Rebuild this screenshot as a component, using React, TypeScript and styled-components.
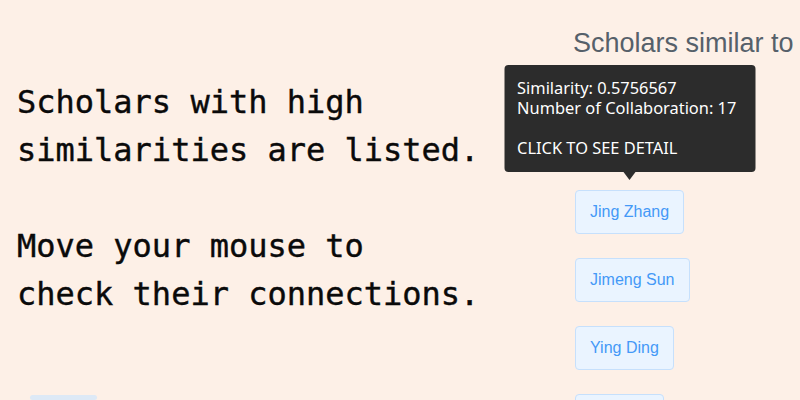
import React from "react"
import styled, { createGlobalStyle } from "styled-components"

const GlobalStyle = createGlobalStyle`
  html, body {
    margin: 0;
    padding: 0;
    background: #fdf0e7;
    overflow: hidden;
  }
`

const Page = styled.div`
  display: flex;
  width: 800px;
  height: 400px;
  overflow: hidden;
  background: #fdf0e7;
`

const Intro = styled.div`
  width: 556px;
  flex-shrink: 0;
  padding: 78px 0 0 17px;
  display: flex;
  flex-direction: column;
`

const IntroText = styled.p`
  margin: 0;
  font-family: "DejaVu Sans Mono", "Liberation Mono", monospace;
  font-size: 32px;
  line-height: 48px;
  color: #0a0a0a;
  white-space: pre;
  -webkit-text-stroke: 0.4px #0a0a0a;
`

const GhostButton = styled.div`
  margin: 77px 0 0 13px;
  width: 67px;
  height: 20px;
  border-radius: 4px;
  background: #dde9f6;
`

const Similar = styled.div`
  flex: 1;
  min-width: 0;
  padding-top: 28px;
  display: flex;
  flex-direction: column;
  align-items: flex-start;
`

const Title = styled.h2`
  margin: 0 0 131px;
  font-family: "Liberation Sans", Arial, sans-serif;
  font-weight: normal;
  font-size: 27px;
  line-height: 31px;
  color: #56606a;
  white-space: nowrap;
`

const List = styled.div`
  display: flex;
  flex-direction: column;
  align-items: flex-start;
  gap: 24px;
  padding-left: 2px;
`

const Item = styled.div`
  position: relative;
`

const ScholarButton = styled.button`
  height: 44px;
  padding: 0 14px;
  box-sizing: border-box;
  border: 1px solid #c6e0fc;
  border-radius: 4px;
  background: #eaf4ff;
  color: #4499f7;
  font-family: "Liberation Sans", Arial, sans-serif;
  font-size: 16px;
  cursor: pointer;
`

const Tooltip = styled.div`
  position: absolute;
  left: 50%;
  bottom: calc(100% + 18px);
  transform: translateX(-50%);
  width: 251px;
  box-sizing: border-box;
  padding: 13px 13px 14px;
  background: #2c2c2c;
  border-radius: 4px;
  color: #ffffff;
  font-family: "Noto Sans", "Open Sans", sans-serif;
  font-size: 16.4px;
  line-height: 20px;
  white-space: pre;

  &::after {
    content: "";
    position: absolute;
    left: 50%;
    top: 100%;
    transform: translateX(-50%);
    border: 6px solid transparent;
    border-top: 8px solid #2c2c2c;
    border-bottom: 0;
  }
`

const scholars = ["Jing Zhang", "Jimeng Sun", "Ying Ding", "Jie Tang"]

export default function App() {
  return (
    <>
      <GlobalStyle />
      <Page>
        <Intro>
          <IntroText>
            {"Scholars with high\nsimilarities are listed.\n\nMove your mouse to\ncheck their connections."}
          </IntroText>
          <GhostButton />
        </Intro>
        <Similar>
          <Title>Scholars similar to</Title>
          <List>
            {scholars.map((name, i) => (
              <Item key={name}>
                {i === 0 && (
                  <Tooltip>
                    {"Similarity: 0.5756567\nNumber of Collaboration: 17\n\nCLICK TO SEE DETAIL"}
                  </Tooltip>
                )}
                <ScholarButton>{name}</ScholarButton>
              </Item>
            ))}
          </List>
        </Similar>
      </Page>
    </>
  )
}
